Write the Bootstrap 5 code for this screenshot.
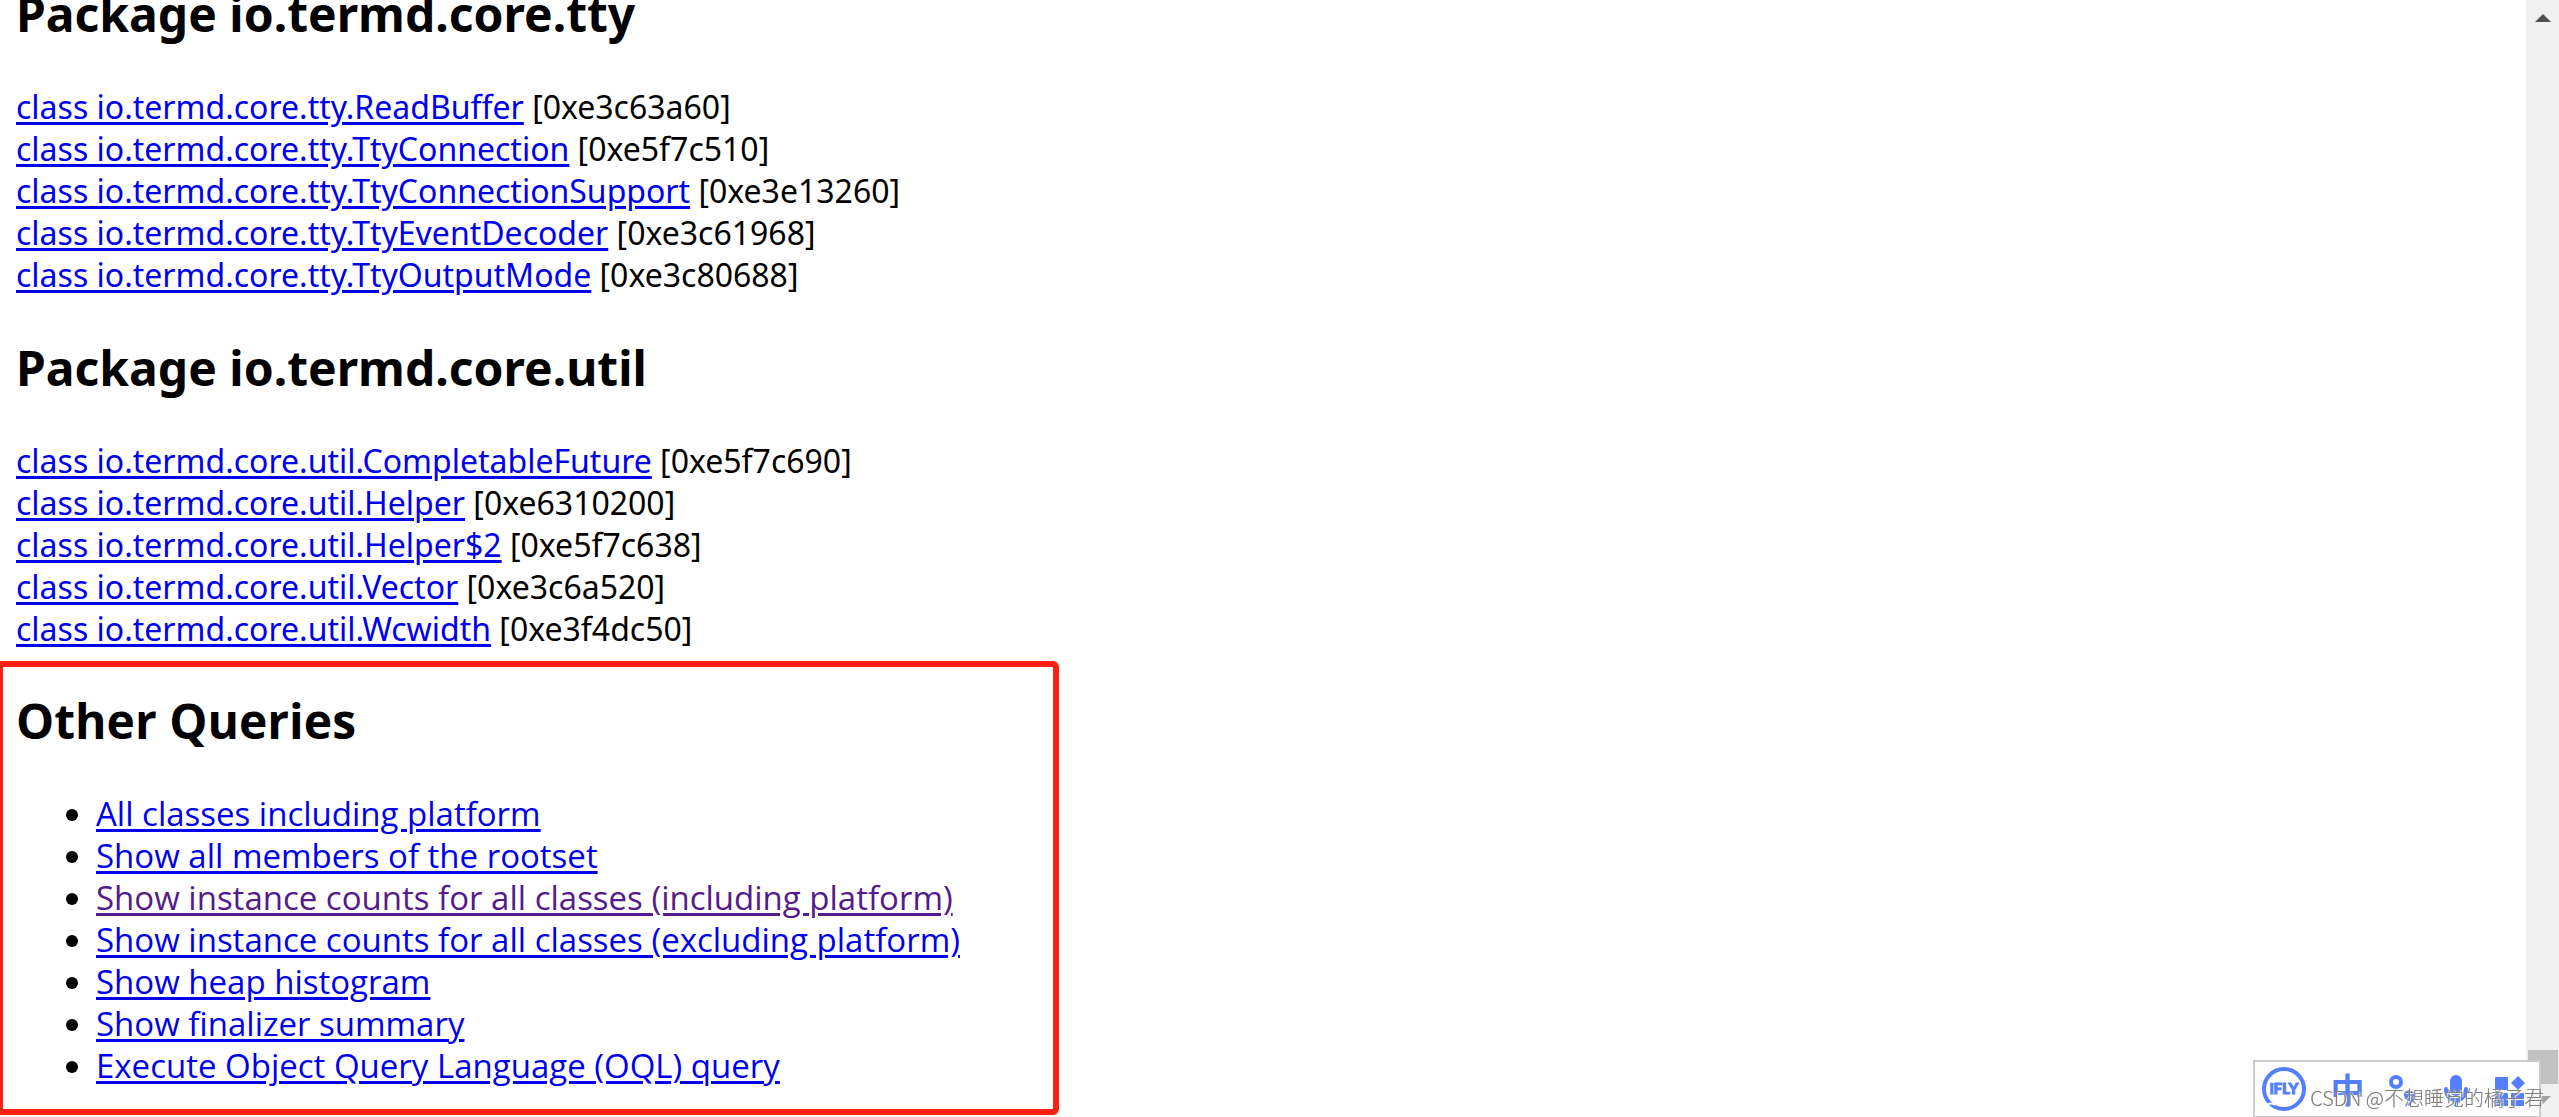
<!DOCTYPE html>
<html lang="en">
<head>
<meta charset="utf-8">
<meta name="viewport" content="width=device-width, initial-scale=1">
<title>All Classes (excluding platform)</title>
<link rel="stylesheet" href="https://cdn.jsdelivr.net/npm/bootstrap@5.3.0/dist/css/bootstrap.min.css">
<style>
  body { font-family: "Open Sans", "Noto Sans", sans-serif; font-size: 33px; line-height: 42px; color: #000; background: #fff; }
  a { color: #00e; text-decoration-thickness: 3px; text-underline-offset: 3px; }
  a:hover { color: #00e; }
  a.seen { color: #551a8b; }
  h2 { font-size: 48px; line-height: 64px; font-weight: 700; margin: 40px 0; }
  /* the document is scrolled, so its first heading is cut by the window */
  .doc { margin-top: -18px; }
  .doc > section:first-child h2 { margin-top: 0; }
  .pkg { padding-left: 16px; font-family: "Noto Sans", sans-serif; font-size: 32px; }
  .marked { max-width: 1059px; margin-top: 11px; padding: 22px 0 22px 13px; border: 6px solid #ff2010; border-left-width: 3px; border-radius: 0 6px 6px 0; }
  .marked h2 { margin-top: 0; }
  .marked ul { padding-left: 80px; }
  .scroll-track { width: 33px; background: #f0f0f0; }
  .scroll-thumb { height: 34px; margin: 0 1px 0 2px; background: #c1c1c1; }
  .scroll-track svg { width: 33px; height: 33px; }
  .ime { right: 18px; bottom: 0; width: 288px; height: 57px; padding-left: 7px; column-gap: 24px; background: #fff; border: 2px solid #ccc; border-bottom-width: 1px; }
  .ime svg, .ime button { display: block; flex: none; }
  .ime button { border: 0; padding: 3px 0 0; background: none; color: #537fff; }
  .ime .lang { width: 35px; padding: 0; font: 700 34px/50px "Noto Sans CJK SC", sans-serif; }
  .stamp { right: 15px; bottom: 4px; font: 300 20px/30px "Noto Sans CJK SC", sans-serif; color: #808080; text-shadow: 1px 1px 1px #fff, 0 0 1px #aaa; pointer-events: none; }
</style>
</head>
<body class="vh-100 overflow-hidden">
<div class="d-flex vh-100">
  <main class="doc flex-grow-1">
    <section class="pkg">
      <h2>Package io.termd.core.tty</h2>
      <div><a href="#">class io.termd.core.tty.ReadBuffer</a> [0xe3c63a60]</div>
      <div><a href="#">class io.termd.core.tty.TtyConnection</a> [0xe5f7c510]</div>
      <div><a href="#">class io.termd.core.tty.TtyConnectionSupport</a> [0xe3e13260]</div>
      <div><a href="#">class io.termd.core.tty.TtyEventDecoder</a> [0xe3c61968]</div>
      <div><a href="#">class io.termd.core.tty.TtyOutputMode</a> [0xe3c80688]</div>
    </section>
    <section class="pkg">
      <h2>Package io.termd.core.util</h2>
      <div><a href="#">class io.termd.core.util.CompletableFuture</a> [0xe5f7c690]</div>
      <div><a href="#">class io.termd.core.util.Helper</a> [0xe6310200]</div>
      <div><a href="#">class io.termd.core.util.Helper$2</a> [0xe5f7c638]</div>
      <div><a href="#">class io.termd.core.util.Vector</a> [0xe3c6a520]</div>
      <div><a href="#">class io.termd.core.util.Wcwidth</a> [0xe3f4dc50]</div>
    </section>
    <section class="marked">
      <h2>Other Queries</h2>
      <ul class="mb-0">
        <li><a href="#">All classes including platform</a></li>
        <li><a href="#">Show all members of the rootset</a></li>
        <li><a class="seen" href="#">Show instance counts for all classes (including platform)</a></li>
        <li><a href="#">Show instance counts for all classes (excluding platform)</a></li>
        <li><a href="#">Show heap histogram</a></li>
        <li><a href="#">Show finalizer summary</a></li>
        <li><a href="#">Execute Object Query Language (OQL) query</a></li>
      </ul>
    </section>
  </main>
  <div class="scroll-track d-flex flex-column flex-shrink-0" aria-hidden="true">
    <svg viewBox="0 0 33 33"><path d="M9 22L17 14L25 22Z" fill="#505050"/></svg>
    <div class="scroll-thumb mt-auto"></div>
    <svg viewBox="0 0 33 33"><path d="M9 12H25L17 20Z" fill="#a3a3a3"/></svg>
  </div>
</div>

<div class="ime position-fixed d-flex align-items-center">
  <svg width="44" height="44" viewBox="0 0 44 44" role="img" aria-label="iFLY">
    <circle cx="22" cy="22" r="20" fill="none" stroke="#537fff" stroke-width="4"/>
    <path d="M5 38q4-3 8 0" fill="none" stroke="#fff" stroke-width="2"/>
    <text x="22" y="27" text-anchor="middle" font-family="Lato, sans-serif" font-weight="900" font-size="15" fill="#537fff" stroke="#537fff">iFLY</text>
  </svg>
  <button class="lang" type="button">中</button>
  <button type="button" aria-label="Punctuation">
    <svg width="27" height="32" viewBox="0 0 27 32"><circle cx="7" cy="7" r="5" fill="none" stroke="#537fff" stroke-width="4"/><path d="M15 19a5 5 0 0 1 10 3c0 5-3 8-6 9l-2-2q4-1 4-3c-4 0-6-3-6-7" fill="#537fff"/></svg>
  </button>
  <button type="button" aria-label="Voice input">
    <svg width="31" height="32" viewBox="0 0 31 32" fill="#537fff"><rect x="10" y="0" width="12" height="21" rx="6"/><path d="M6 14c0 15 20 15 20 0" fill="none" stroke="#537fff" stroke-width="4" stroke-linecap="round"/><path d="M14 24h4v7h-4z"/></svg>
  </button>
  <button type="button" aria-label="Tools">
    <svg width="30" height="32" viewBox="0 0 30 32" fill="#537fff"><rect y="2" width="13" height="13" rx="1"/><rect y="18" width="13" height="13" rx="1"/><rect x="16" y="18" width="13" height="13" rx="1"/><path d="M23 1l7 7-7 7-7-7z"/></svg>
  </button>
</div>
<div class="stamp position-fixed text-nowrap">CSDN @不想睡觉的橘子君</div>
<script src="https://cdn.jsdelivr.net/npm/bootstrap@5.3.0/dist/js/bootstrap.bundle.min.js"></script>
</body>
</html>
